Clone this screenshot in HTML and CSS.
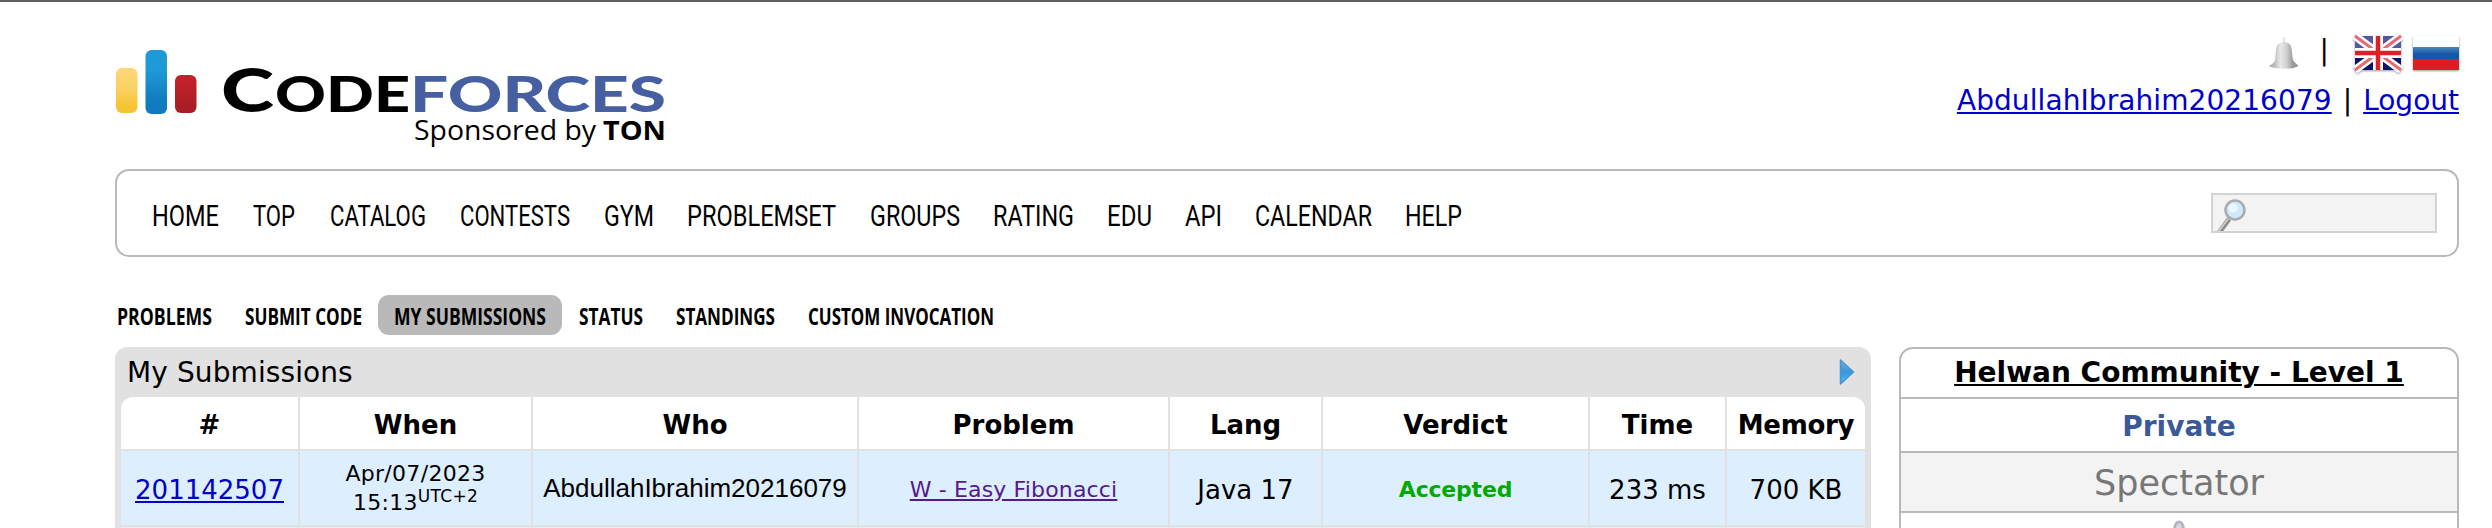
FILE: index.html
```html
<!DOCTYPE html>
<html lang="en">
<head>
<meta charset="utf-8">
<title>My Submissions - Codeforces</title>
<link rel="stylesheet" href="styles.css">
</head>
<body>
<header class="header">
  <svg class="logo" width="560" height="110" viewBox="110 45 560 110">
    <defs>
      <linearGradient id="y" x2="0" y2="1"><stop offset="0" stop-color="#fdd77c"/><stop offset=".5" stop-color="#f9d060"/><stop offset=".85" stop-color="#f6c433"/></linearGradient>
      <linearGradient id="b" x2="0" y2="1"><stop offset=".3" stop-color="#1f9ad7"/><stop offset=".8" stop-color="#117bbf"/></linearGradient>
      <linearGradient id="r" x2="0" y2="1"><stop offset=".2" stop-color="#c2212a"/><stop offset=".8" stop-color="#a81e24"/></linearGradient>
    </defs>
    <rect x="116" y="68" width="21.500" height="45" rx="6" fill="url(#y)"/>
    <rect x="145.500" y="50" width="21.500" height="64" rx="6" fill="url(#b)"/>
    <rect x="175" y="75" width="21.500" height="38" rx="6" fill="url(#r)"/>
    <g class="brand">
      <text x="221" y="112" font-size="60" textLength="53" lengthAdjust="spacingAndGlyphs">C</text>
      <text x="275" y="112" font-size="50" textLength="135" lengthAdjust="spacingAndGlyphs">ODE</text>
      <text class="blue" x="410" y="112" font-size="50" textLength="256" lengthAdjust="spacingAndGlyphs">FORCES</text>
    </g>
    <g class="sponsor">
      <text x="414" y="140" textLength="182" lengthAdjust="spacingAndGlyphs">Sponsored by</text>
      <text class="ton" x="603" y="140" textLength="63" lengthAdjust="spacingAndGlyphs">TON</text>
    </g>
  </svg>
  <div class="user">
    <div class="tools">
      <svg class="bell" width="32" height="34" viewBox="0 0 32 34">
        <defs><linearGradient id="bl"><stop offset=".15" stop-color="#b4b4b4"/><stop offset=".4" stop-color="#e8e8e8"/><stop offset=".6" stop-color="#d0d0d0"/><stop offset=".8" stop-color="#9a9a9a"/></linearGradient></defs>
        <path d="M15.300 1h1.400v5c5 1 6.500 3 7 8l1 9c1 3 3 4 6 7l-5 2c-7 1-13 1-19 0l-6-1.500C4 28 6 27 7 24l1-10c.5-5 2-7 7.300-8z" fill="url(#bl)"/>
      </svg>
      <span class="bar">|</span>
      <svg class="flag uk" width="46" height="34" viewBox="0 0 46 34">
        <rect width="46" height="34" fill="#0c1568"/><rect width="46" height="17" fill="#54589c"/>
        <path d="M0 0l46 34M46 0L0 34" stroke="#fff" stroke-width="8"/>
        <path d="M0 0l46 34M46 0L0 34" stroke="#e86a72" stroke-width="3"/>
        <path d="M23 0v34M0 17h46" stroke="#fff" stroke-width="10"/>
        <path d="M23 0v34M0 17h46" stroke="#dc2128" stroke-width="4.500"/>
      </svg>
      <svg class="flag" width="46" height="34" viewBox="0 0 46 34">
        <defs><linearGradient id="ru" x2="0" y2="1"><stop offset="0" stop-color="#4c86bd"/><stop offset=".6" stop-color="#1459a8"/></linearGradient></defs>
        <rect width="46" height="34" fill="#fff"/><rect y="11" width="46" height="12" fill="url(#ru)"/><rect y="23" width="46" height="11" fill="#e01b22"/>
      </svg>
    </div>
    <div class="account"><a class="name">AbdullahIbrahim20216079</a><span class="sep">|</span><a>Logout</a></div>
  </div>
</header>

<nav class="menu">
  <svg class="links" width="1320" height="40" viewBox="0 0 1320 40">
    <text x="1" y="30" textLength="67" lengthAdjust="spacingAndGlyphs">HOME</text>
    <text x="102" y="30" textLength="42" lengthAdjust="spacingAndGlyphs">TOP</text>
    <text x="179" y="30" textLength="96" lengthAdjust="spacingAndGlyphs">CATALOG</text>
    <text x="309" y="30" textLength="110" lengthAdjust="spacingAndGlyphs">CONTESTS</text>
    <text x="453" y="30" textLength="50" lengthAdjust="spacingAndGlyphs">GYM</text>
    <text x="536" y="30" textLength="149" lengthAdjust="spacingAndGlyphs">PROBLEMSET</text>
    <text x="719" y="30" textLength="90" lengthAdjust="spacingAndGlyphs">GROUPS</text>
    <text x="842" y="30" textLength="81" lengthAdjust="spacingAndGlyphs">RATING</text>
    <text x="956" y="30" textLength="45" lengthAdjust="spacingAndGlyphs">EDU</text>
    <text x="1034" y="30" textLength="37" lengthAdjust="spacingAndGlyphs">API</text>
    <text x="1104" y="30" textLength="117" lengthAdjust="spacingAndGlyphs">CALENDAR</text>
    <text x="1254" y="30" textLength="57" lengthAdjust="spacingAndGlyphs">HELP</text>
  </svg>
  <div class="search">
    <svg width="30" height="32" viewBox="0 0 30 32">
      <path d="M12 20L1 35" stroke="#8c8c8c" stroke-width="5"/><path d="M11 20L0 34" stroke="#ccc" stroke-width="2"/>
      <circle cx="18" cy="11" r="9.500" fill="#cfe9fa" stroke="#a9abae" stroke-width="2.500"/><circle cx="16" cy="9" r="4.500" fill="#e9f7ff"/>
    </svg>
  </div>
</nav>

<nav class="submenu">
  <a><svg width="95" height="40"><text x="0" y="30" textLength="95" lengthAdjust="spacingAndGlyphs">PROBLEMS</text></svg></a>
  <a><svg width="117" height="40"><text x="0" y="30" textLength="117" lengthAdjust="spacingAndGlyphs">SUBMIT CODE</text></svg></a>
  <a class="current"><svg width="152" height="40"><text x="0" y="30" textLength="152" lengthAdjust="spacingAndGlyphs">MY SUBMISSIONS</text></svg></a>
  <a><svg width="64" height="40"><text x="0" y="30" textLength="64" lengthAdjust="spacingAndGlyphs">STATUS</text></svg></a>
  <a><svg width="99" height="40"><text x="0" y="30" textLength="99" lengthAdjust="spacingAndGlyphs">STANDINGS</text></svg></a>
  <a><svg width="186" height="40"><text x="0" y="30" textLength="186" lengthAdjust="spacingAndGlyphs">CUSTOM INVOCATION</text></svg></a>
</nav>

<main class="content">
  <section class="datatable">
    <div class="caption"><span>My Submissions</span>
      <svg width="16" height="28" viewBox="0 0 16 28">
        <defs><linearGradient id="ar" x2="0" y2="1"><stop offset="0" stop-color="#6db0e2"/><stop offset=".5" stop-color="#3a94da"/><stop offset=".8" stop-color="#35b6f8"/><stop offset="1" stop-color="#5aa0d0"/></linearGradient></defs>
        <path d="M1.500 2v24L14.500 14z" fill="url(#ar)" stroke="#4a94d0" stroke-width="1.500" stroke-linejoin="round"/>
      </svg>
    </div>
    <div class="grid">
      <div class="th">#</div><div class="th">When</div><div class="th">Who</div><div class="th">Problem</div><div class="th">Lang</div><div class="th">Verdict</div><div class="th">Time</div><div class="th memory">Memory</div>
      <div class="td"><a>201142507</a></div>
      <div class="td date"><div>Apr/07/2023<br>15:13<sup>UTC+2</sup></div></div>
      <div class="td who">AbdullahIbrahim20216079</div>
      <div class="td problem"><a>W - Easy Fibonacci</a></div>
      <div class="td">Java 17</div>
      <div class="td verdict">Accepted</div>
      <div class="td">233 ms</div>
      <div class="td">700 KB</div>
      <div class="td"></div><div class="td"></div><div class="td"></div><div class="td"></div><div class="td"></div><div class="td"></div><div class="td"></div><div class="td"></div>
    </div>
  </section>
  <aside class="sidebar">
    <div class="row title"><a>Helwan Community - Level 1</a></div>
    <div class="row private">Private</div>
    <div class="row spectator">Spectator</div>
    <div class="row icon"><svg width="16" height="16" viewBox="0 0 16 16"><path d="M3 16C3 6 5 2 8 2s5 4 5 14" fill="#d9d8e4" stroke="#b4b3c4" stroke-width="3"/></svg></div>
  </aside>
</main>
</body>
</html>
```

FILE: styles.css
```css
* { box-sizing: border-box; }
body {
  margin: 0;
  width: 2492px;
  height: 528px;
  overflow: hidden;
  padding: 0 33px 0 115px;
  border-top: 2px solid #5f5f5f;
  background: #fff;
  color: #000;
  font-family: Verdana, "DejaVu Sans", sans-serif;
  font-size: 26px;
}
svg { display: block; overflow: visible; }
a { color: #0000cc; text-decoration: underline; text-decoration-thickness: 2px; text-underline-offset: 2px; }

.header { display: flex; justify-content: space-between; height: 167px; }
.logo { margin: 43px 0 0 -5px; }
.brand { font-family: Lato, sans-serif; font-weight: 900; }
.brand .blue { fill: #455fa0; }
.sponsor { font-family: "Open Sans", sans-serif; font-size: 27px; }
.sponsor .ton { font-weight: 700; }

.user { display: flex; flex-direction: column; align-items: flex-end; padding-top: 34px; font-size: 28px; }
.tools { display: flex; height: 36px; align-items: flex-start; }
.bar { margin: -3px 26px 0 20px; line-height: 36px; }
.flag { filter: drop-shadow(0 1px 1px #999); }
.uk { margin-right: 12px; }
.account { display: flex; line-height: 34px; margin-top: 12px; }
.name { letter-spacing: .08px; }
.sep { margin: 0 11px; }

.menu {
  display: flex;
  justify-content: space-between;
  align-items: flex-start;
  height: 88px;
  width: 2344px;
  border: 2px solid #b9b9b9;
  border-radius: 14px;
  padding: 22px 20px 0 34px;
}
.links { margin-top: 3px; font-family: Roboto, sans-serif; font-size: 29px; }
.search { width: 226px; height: 40px; border: 2px solid #d3d3d3; background: #f3f3f3; padding: 4px; overflow: hidden; }

.submenu { display: flex; margin: 38px 0 12px 1.5px; height: 40px; font: bold 23px "Open Sans", sans-serif; }
.submenu a { padding: 0 16.5px; }
.submenu a:first-child { padding-left: 0; }
.submenu .current { padding: 0 16px; border-radius: 11px; background: #b9b9b9; }

.content { display: flex; gap: 28px; align-items: flex-start; }
.datatable { width: 1756px; background: #e1e1e1; border-radius: 12px 12px 0 0; padding: 0 6px; }
.caption { display: flex; justify-content: space-between; height: 50px; padding: 11px 10px 0 6px; font-size: 28px; line-height: 34px; }
.caption span { margin-top: -2px; letter-spacing: .1px; }
.grid {
  display: grid;
  grid-template-columns: 177px 231px 324px 309px 151px 265px 135px 138px;
  grid-template-rows: 52px 74px 20px;
  gap: 2px;
  overflow: hidden;
  border-radius: 12px 12px 0 0;
}
.th, .td { display: flex; align-items: center; justify-content: center; background: #ddeeff; white-space: nowrap; }
.th { background: #fff; font-weight: bold; padding-top: 3px; }
.memory { letter-spacing: -.3px; }
.td { padding-top: 3px; }
.date { font-size: 22px; line-height: 29px; text-align: center; padding-top: 0; letter-spacing: .3px; }
.date sup { font-size: 17px; line-height: 0; }
.who { font-family: Arial, "Liberation Sans", sans-serif; padding-top: 0; }
.problem { font-size: 22px; letter-spacing: .15px; }
.problem a { color: #551a8b; }
.verdict { font-size: 22px; font-weight: bold; color: #00aa00; letter-spacing: -.2px; }

.sidebar { width: 560px; border: 2px solid #b9b9b9; border-radius: 14px 14px 0 0; overflow: hidden; text-align: center; }
.row { border-bottom: 2px solid #b9b9b9; font-size: 28px; font-weight: bold; }
.title { height: 50px; line-height: 48px; }
.title a { color: #000; }
.private { height: 54px; line-height: 56px; color: #3b5998; }
.spectator { height: 60px; line-height: 61px; background: #f3f3f3; color: #777; font-size: 35px; font-weight: normal; }
.icon { height: 40px; display: flex; justify-content: center; padding-top: 7px; }
```
